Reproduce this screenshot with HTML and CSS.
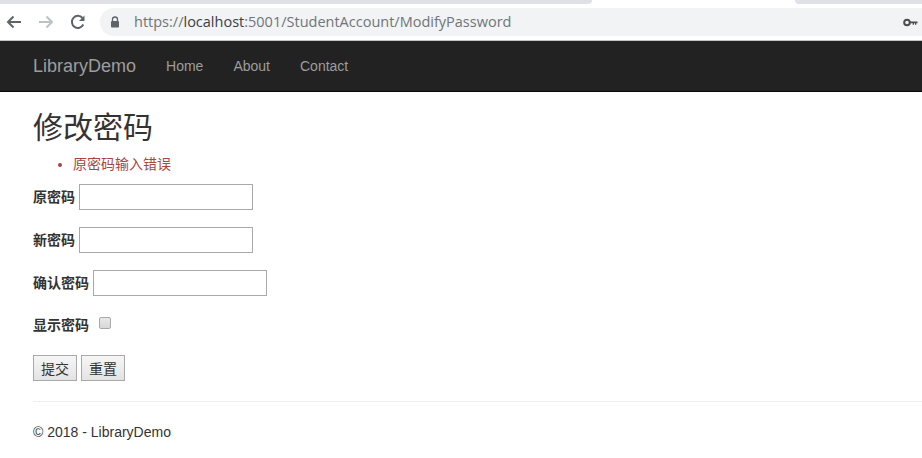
FILE: index.html
```html
<!DOCTYPE html>
<html lang="zh">
<head>
<meta charset="utf-8">
<title>修改密码</title>
<link rel="stylesheet" href="styles.css">
</head>
<body>
<div class="tabstrip">
  <div class="tab-left"></div>
  <div class="tab-active"></div>
  <div class="tab-right"></div>
</div>
<div class="toolbar">
  <svg class="tool" width="18" height="18" viewBox="0 0 18 18"><path d="M16 9H3M8.500 3.500L3 9l5.500 5.500" fill="none" stroke="#5f6368" stroke-width="2"/></svg>
  <svg class="tool" width="18" height="18" viewBox="0 0 18 18"><path d="M2 9h13M9.500 3.500L15 9l-5.500 5.500" fill="none" stroke="#bdc1c6" stroke-width="2"/></svg>
  <svg class="tool" width="18" height="18" viewBox="0 0 18 18"><path d="M14.300 11.500A6 6 0 1 1 13.500 5" fill="none" stroke="#5f6368" stroke-width="2"/><path d="M15.500 2.500v5.500H10z" fill="#5f6368"/></svg>
  <div class="omnibox">
    <svg class="lock" width="10" height="12" viewBox="0 0 10 12"><path d="M2.500 5V3.500a2.500 2.500 0 0 1 5 0V5" fill="none" stroke="#5f6368" stroke-width="1.300"/><rect x="1" y="5" width="8" height="6.500" rx="1" fill="#5f6368"/></svg>
    <span class="url"><span class="url-dim">https://</span><span class="url-host">localhost</span><span class="url-dim">:5001/StudentAccount/ModifyPassword</span></span>
    <svg class="key" width="15" height="9" viewBox="0 0 15 9"><circle cx="4" cy="4.500" r="2.800" fill="none" stroke="#4a4d51" stroke-width="2"/><path d="M7 3.500h7.500v1.800h-1.200v1.500h-1.300V5.300h-1v1.500h-1.300V5.300H7z" fill="#4a4d51"/></svg>
  </div>
</div>
<nav class="navbar">
  <a class="brand" href="#">LibraryDemo</a>
  <a class="nav-link" href="#">Home</a>
  <a class="nav-link" href="#">About</a>
  <a class="nav-link" href="#">Contact</a>
</nav>
<main class="content">
  <h2 class="title">修改密码</h2>
  <ul class="errors"><li>原密码输入错误</li></ul>
  <form class="form">
    <div class="row"><label class="label">原密码</label><input class="field" type="password"></div>
    <div class="row"><label class="label">新密码</label><input class="field" type="password"></div>
    <div class="row"><label class="label">确认密码</label><input class="field" type="password"></div>
    <div class="row row-check"><label class="label">显示密码</label><input class="check" type="checkbox"></div>
    <div class="buttons"><button class="btn" type="button">提交</button><button class="btn" type="button">重置</button></div>
  </form>
  <hr class="rule">
  <footer class="footer">© 2018 - LibraryDemo</footer>
</main>
</body>
</html>
```
FILE: styles.css
```css
* { box-sizing: border-box; }
html, body { margin: 0; padding: 0; height: 458px; overflow: hidden; background: #fff; }
body { font-family: "Liberation Sans", "Noto Sans CJK SC", sans-serif; font-size: 14px; color: #333; line-height: 20px; }

.tabstrip { height: 8px; display: flex; background: #fff; }
.tab-left { width: 592px; height: 4px; background: #dee1e6; border-bottom-right-radius: 6px; }
.tab-active { width: 203px; background: #fff; }
.tab-right { flex: 1; height: 4px; background: #dee1e6; border-bottom-left-radius: 6px; }

.toolbar { height: 33px; display: flex; align-items: flex-start; background: #fff; border-bottom: 1px solid #c4c4c4; padding-left: 5px; }
.tool { margin-right: 14px; margin-top: 5px; flex: none; }
.omnibox { flex: 1; height: 28px; margin-left: -1px; background: #f1f3f4; border-radius: 14px 0 0 14px; display: flex; align-items: center; padding-left: 10px; }
.lock { flex: none; margin-right: 14px; margin-top: -1px; }
.url { font-family: "Open Sans", "Noto Sans", sans-serif; font-size: 14.500px; white-space: nowrap; }
.url-dim { color: #70757a; }
.url-host { color: #3c4043; }
.key { margin-left: auto; margin-right: 4px; flex: none; }

.navbar { height: 51px; background: #222; border-bottom: 1px solid #080808; display: flex; align-items: center; padding-left: 33px; }
.brand { color: #9d9d9d; font-size: 18px; text-decoration: none; margin-right: 30px; }
.nav-link { color: #9d9d9d; text-decoration: none; margin-right: 30px; }

.content { padding-left: 33px; }
.title { font-size: 30px; font-weight: 400; line-height: 33px; margin: 19px 0 0; color: #333; }
.errors { margin: 10px 0 0; padding: 0 0 0 40px; color: #a94442; list-style: disc; line-height: 20px; }
.form { margin-top: 10px; }
.row { display: flex; align-items: center; height: 26px; margin-bottom: 17px; }
.label { font-weight: 700; margin-right: 4px; }
.field { width: 174px; height: 26px; border: 1px solid #a9a9a9; background: #fff; padding: 1px 2px; border-radius: 0; }
.row-check { height: 20px; margin-top: 19px; margin-bottom: 20px; }
.check { appearance: none; width: 12px; height: 12px; margin: -4px 0 0 6px; border: 1px solid #a9a9a9; border-radius: 2px; background: linear-gradient(#e8e8e8, #d8d8d8); }
.buttons { display: flex; gap: 4px; }
.btn { width: 44px; height: 26px; padding: 0; font-family: inherit; font-size: 14px; color: #333; border: 1px solid #a9a9a9; background: linear-gradient(#f6f6f6, #e3e3e3); border-radius: 0; }
.rule { border: 0; border-top: 1px solid #eee; margin: 20px 0 0; }
.footer { margin-top: 20px; color: #333; }
```
